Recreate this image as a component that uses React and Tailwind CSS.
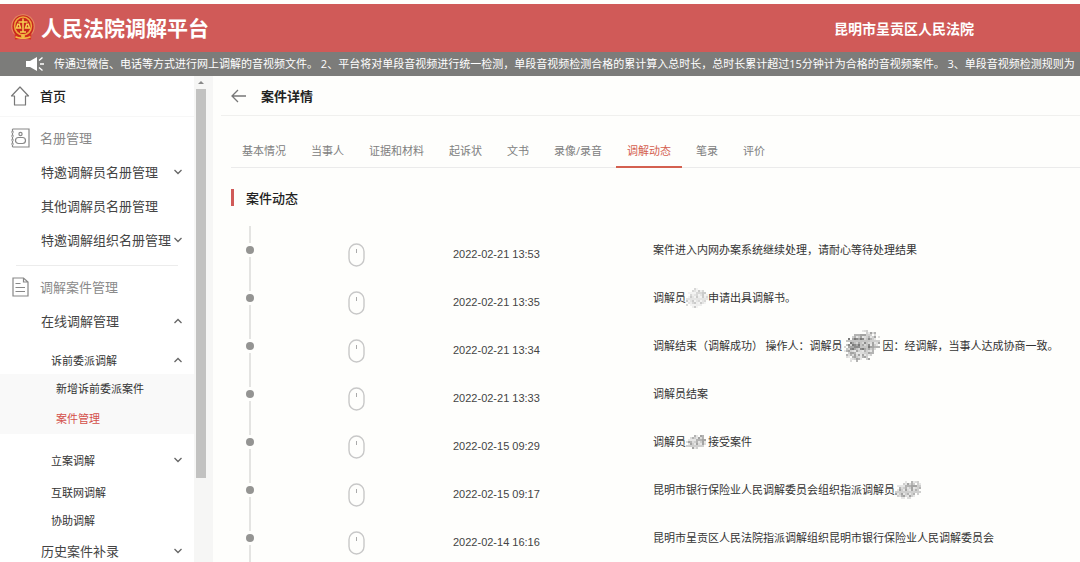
import React from "react";

const CJK = "font-['Noto_Sans_CJK_SC',sans-serif]";

function Emblem() {
  return (
    <svg viewBox="0 0 24 28" className="h-7 w-6 shrink-0" aria-hidden="true">
      <ellipse cx="12" cy="12.5" rx="11.8" ry="12.3" fill="#e58a60" />
      <ellipse cx="12" cy="12.5" rx="10.6" ry="11.2" fill="#c8281e" />
      <ellipse cx="12" cy="12" rx="9.2" ry="9.800" fill="#f0a63c" />
      <ellipse cx="12" cy="12" rx="7.6" ry="8.2" fill="#c9261c" />
      <path d="M12 4.500v14M7.500 8h9M7 9.500L5.500 14h4L8 9.500M16 9.500L14.500 14h4L17 9.500M9 18h6" stroke="#f6cf52" strokeWidth="1.5" fill="none" />
      <path d="M3.500 19.500q4 3.500 8.500 2.500 4.500 1 8.500-2.500l-.5 6q-4-1-8-.2-4-.8-8 .2z" fill="#d5301f" />
      <path d="M4.500 22.800q4 1.800 7.500 1 3.500.8 7.500-1" stroke="#f3b945" strokeWidth="1.800" fill="none" />
      <circle cx="12" cy="22" r="2" fill="#f3b945" />
    </svg>
  );
}

function SpeakerIcon() {
  return (
    <svg viewBox="0 0 20 16" className="h-4 w-5 shrink-0" aria-hidden="true">
      <path d="M0 5h4L11 1v14L4 11H0z" fill="#fff" />
      <path d="M13 4.500l3.500-3M14 8h4M13 11.500l3.500 3" stroke="#fff" strokeWidth="1.400" />
    </svg>
  );
}

function HomeIcon() {
  return (
    <svg viewBox="0 0 20 20" className="h-5 w-5" fill="none" stroke="#777" strokeWidth="1.200" aria-hidden="true">
      <path d="M4.500 10H1.500L10 1l8.500 9h-3v9h-11z" strokeLinejoin="round" />
    </svg>
  );
}

function RosterIcon() {
  return (
    <svg viewBox="0 0 20 20" className="h-5 w-5" fill="none" stroke="#888" strokeWidth="1.200" aria-hidden="true">
      <path d="M2.500 1h16.500v18H2.500" />
      <path d="M2.500 1v18" strokeDasharray="2.500 1.500" />
      <path d="M1 4h3M1 8h3M1 12h3M1 16h3" />
      <circle cx="10.500" cy="6" r="1.600" />
      <rect x="5.500" y="9.500" width="10" height="6" rx="3" />
    </svg>
  );
}

function FileIcon() {
  return (
    <svg viewBox="0 0 20 20" className="h-5 w-5" fill="none" stroke="#888" strokeWidth="1.200" aria-hidden="true">
      <path d="M3 1h10.500L18 5v14H3zM13.500 1v4H18" />
      <path d="M5.500 6.500h5M5.500 10.500h9.500M5.500 14.500h9.500" />
    </svg>
  );
}

function Chevron({ open }) {
  return (
    <svg viewBox="0 0 10 6" className="h-[6px] w-[10px] shrink-0" fill="none" stroke="#666" strokeWidth="1.300" aria-hidden="true">
      <path d={open ? "M1.500 5L5 1.500 8.500 5" : "M1.500 1L5 4.500 8.500 1"} />
    </svg>
  );
}

function MouseIcon() {
  return (
    <svg viewBox="0 0 17 24" className="h-6 w-[17px]" fill="none" aria-hidden="true">
      <rect x="1" y="1" width="15" height="22" rx="7.500" stroke="#c8c8c8" strokeWidth="1.400" />
      <path d="M8.500 6v4" stroke="#aaa" strokeWidth="1" />
    </svg>
  );
}

const PALETTES = {
  light: ["#f3f3f2", "#e4e4e3", "#d8d8d7", "#eeeeed", "#cbcbca"],
  mid: ["#e6e6e5", "#cfcfce", "#b4b4b3", "#dcdcdb", "#a4a4a3"],
  dark: ["#a8a8a7", "#c4c4c3", "#d6d6d5", "#8c8c8b", "#7a7a79"],
};

function Mosaic({ cols, rows, tone, className }) {
  const cells = [];
  for (let y = 0; y < rows; y++) {
    for (let x = 0; x < cols; x++) {
      const dx = (x + 0.5) / cols - 0.5;
      const dy = (y + 0.5) / rows - 0.5;
      const noise = (x * 37 + y * 61 + x * y * 13) % 17;
      if (dx * dx + dy * dy + dx * dy * 0.6 > 0.14 + noise * 0.008) continue;
      const shade = tone === "dark" && (dy > 0.1 || dy < -0.25 || dx > 0.2) ? "mid" : tone;
      cells.push(
        <rect key={`${x}-${y}`} x={x * 2} y={y * 2} width="2" height="2" fill={PALETTES[shade][noise % 5]} />
      );
    }
  }
  return (
    <svg viewBox={`0 0 ${cols * 2} ${rows * 2}`} className={`shrink-0 blur-[0.5px] ${className}`} aria-hidden="true">
      {cells}
    </svg>
  );
}

function Group({ icon, label }) {
  return (
    <h2 className="flex h-[34px] items-center gap-[10px] pl-[10px] text-[13px] text-[#8a8a8a]">
      {icon}
      {label}
    </h2>
  );
}

function Item({ label, open }) {
  return (
    <button type="button" className="flex h-[34px] w-full items-center justify-between whitespace-nowrap pr-[11px] pl-[41px] text-[13px] text-[#444]">
      {label}
      {open !== undefined && <Chevron open={open} />}
    </button>
  );
}

function SubItem({ label, open }) {
  return (
    <button type="button" className="flex h-7 w-full items-center justify-between pr-[11px] pl-[51px] text-[11px] text-[#333]">
      {label}
      {open !== undefined && <Chevron open={open} />}
    </button>
  );
}

function Sidebar() {
  return (
    <nav className="w-[194px] shrink-0 overflow-hidden bg-white">
      <a href="#home" className="flex h-10 items-center gap-[10px] pl-[10px] text-[13px] font-medium text-[#222]">
        <HomeIcon />
        首页
      </a>
      <div className="border-t border-[#f7f7f7] pt-1 pb-2">
        <Group icon={<RosterIcon />} label="名册管理" />
        <Item label="特邀调解员名册管理" open={false} />
        <Item label="其他调解员名册管理" />
        <Item label="特邀调解组织名册管理" open={false} />
      </div>
      <div className="mx-4 border-t border-[#ececec]" />
      <div className="pt-1">
        <Group icon={<FileIcon />} label="调解案件管理" />
        <Item label="在线调解管理" open={true} />
        <div className="pt-2">
          <SubItem label="诉前委派调解" open={true} />
        </div>
        <div className="bg-[#f9f9f9] text-[11px]">
          <a href="#new" className="flex h-7 items-center pl-14 text-[#333]">新增诉前委派案件</a>
          <a href="#cases" className="flex h-8 items-center pl-14 text-[#d4504a]" aria-current="page">案件管理</a>
        </div>
        <div className="pt-3 pb-1">
          <SubItem label="立案调解" open={false} />
        </div>
        <SubItem label="互联网调解" />
        <SubItem label="协助调解" />
        <Item label="历史案件补录" open={false} />
      </div>
    </nav>
  );
}

function ScrollTrack() {
  return (
    <div className="flex w-[19px] shrink-0 flex-col bg-[#f6f6f5]" aria-hidden="true">
      <div className="flex h-[13px] w-[13px] items-center justify-center">
        <svg viewBox="0 0 6 3" className="h-[3px] w-[6px]"><path d="M0 3L3 0l3 3z" fill="#888" /></svg>
      </div>
      <div className="ml-[2px] h-4/5 w-[10px] bg-[#c2c2c1]" />
    </div>
  );
}

const TABS = ["基本情况", "当事人", "证据和材料", "起诉状", "文书", "录像/录音", "调解动态", "笔录", "评价"];

const EVENTS = [
  { time: "2022-02-21 13:53", text: "案件进入内网办案系统继续处理，请耐心等待处理结果" },
  {
    time: "2022-02-21 13:35",
    text: "调解员",
    mask: <Mosaic cols={11} rows={10} tone="light" className="h-5 w-[22px]" />,
    rest: "申请出具调解书。",
  },
  {
    time: "2022-02-21 13:34",
    text: "调解结束（调解成功） 操作人：调解员",
    mask: <Mosaic cols={18} rows={16} tone="dark" className="h-8 w-10" />,
    rest: "因：经调解，当事人达成协商一致。",
  },
  { time: "2022-02-21 13:33", text: "调解员结案" },
  {
    time: "2022-02-15 09:29",
    text: "调解员",
    mask: <Mosaic cols={11} rows={7} tone="mid" className="h-[14px] w-[22px]" />,
    rest: "接受案件",
  },
  {
    time: "2022-02-15 09:17",
    text: "昆明市银行保险业人民调解委员会组织指派调解员",
    mask: <Mosaic cols={13} rows={9} tone="mid" className="h-[18px] w-[26px]" />,
  },
  { time: "2022-02-14 16:16", text: "昆明市呈贡区人民法院指派调解组织昆明市银行保险业人民调解委员会" },
];

function Timeline() {
  return (
    <ol className="mt-[18px]">
      {EVENTS.map((e) => (
        <li key={e.time} className="grid h-12 grid-cols-[38px_174px_210px_1fr] items-center">
          <div className="flex h-full flex-col items-center gap-[3px]">
            <span className="w-[2px] flex-1 bg-[#e4e4e2]" />
            <span className="h-2 w-2 rounded-full bg-[#949492]" />
            <span className="w-[2px] flex-1 bg-[#e4e4e2]" />
          </div>
          <div className="flex justify-center pt-[10px]">
            <MouseIcon />
          </div>
          <time className="pt-[10px] pl-[10px] font-['Liberation_Sans',sans-serif] text-[11px] text-[#444]">{e.time}</time>
          <p className="flex items-center whitespace-nowrap text-[11px] text-[#333]">
            <span className="whitespace-pre">{e.text}</span>
            {e.mask}
            {e.rest}
          </p>
        </li>
      ))}
    </ol>
  );
}

export default function App() {
  return (
    <div className={`flex h-screen flex-col overflow-hidden bg-[#fefefc] ${CJK}`}>
      <header className="mt-1 flex h-12 shrink-0 items-center justify-between bg-[#d05a58] pr-[106px] pl-[11px] text-white">
        <div className="flex items-center gap-[6px]">
          <Emblem />
          <h1 className="text-[21px] font-bold">人民法院调解平台</h1>
        </div>
        <span className="text-[14px] font-bold">昆明市呈贡区人民法院</span>
      </header>
      <div className="flex h-6 shrink-0 items-center gap-2 overflow-hidden bg-[#7c7c7a] pl-[26px] font-['Open_Sans','Noto_Sans_CJK_SC',sans-serif] text-[11px] whitespace-nowrap text-white">
        <SpeakerIcon />
        <p>传通过微信、电话等方式进行网上调解的音视频文件。 2、平台将对单段音视频进行统一检测，单段音视频检测合格的累计算入总时长，总时长累计超过15分钟计为合格的音视频案件。 3、单段音视频检测规则为</p>
      </div>
      <div className="flex min-h-0 flex-1">
        <Sidebar />
        <ScrollTrack />
        <main className="min-w-0 flex-1 overflow-hidden pl-2">
          <div className="flex h-10 items-center gap-[14px] border-b border-[#f0f0ee] pl-[10px]">
            <button type="button" aria-label="返回">
              <svg viewBox="0 0 16 14" className="h-[14px] w-4" fill="none" stroke="#777" strokeWidth="1.300"><path d="M7 1L1 7l6 6M1 7h14" /></svg>
            </button>
            <h2 className="text-[13px] font-bold text-[#222]">案件详情</h2>
          </div>
          <div className="pt-5 pl-[10px]">
            <div role="tablist" className="flex h-8 gap-[3px] border-b border-[#ebebeb] font-['Open_Sans','Noto_Sans_CJK_SC',sans-serif] text-[11px] whitespace-nowrap">
              {TABS.map((t) => (
                <button
                  key={t}
                  type="button"
                  role="tab"
                  aria-selected={t === "调解动态"}
                  className={
                    t === "调解动态"
                      ? "-mb-px border-b-2 border-[#d4604f] px-[11px] text-[#d4604f]"
                      : "-mb-px border-b-2 border-transparent px-[11px] text-[#808080]"
                  }
                >
                  {t}
                </button>
              ))}
            </div>
            <div className="mt-5 flex items-center gap-3">
              <span className="h-[17px] w-[3px] bg-[#d05a58]" />
              <h3 className="text-[13px] font-medium text-[#222]">案件动态</h3>
            </div>
            <Timeline />
          </div>
        </main>
      </div>
    </div>
  );
}
